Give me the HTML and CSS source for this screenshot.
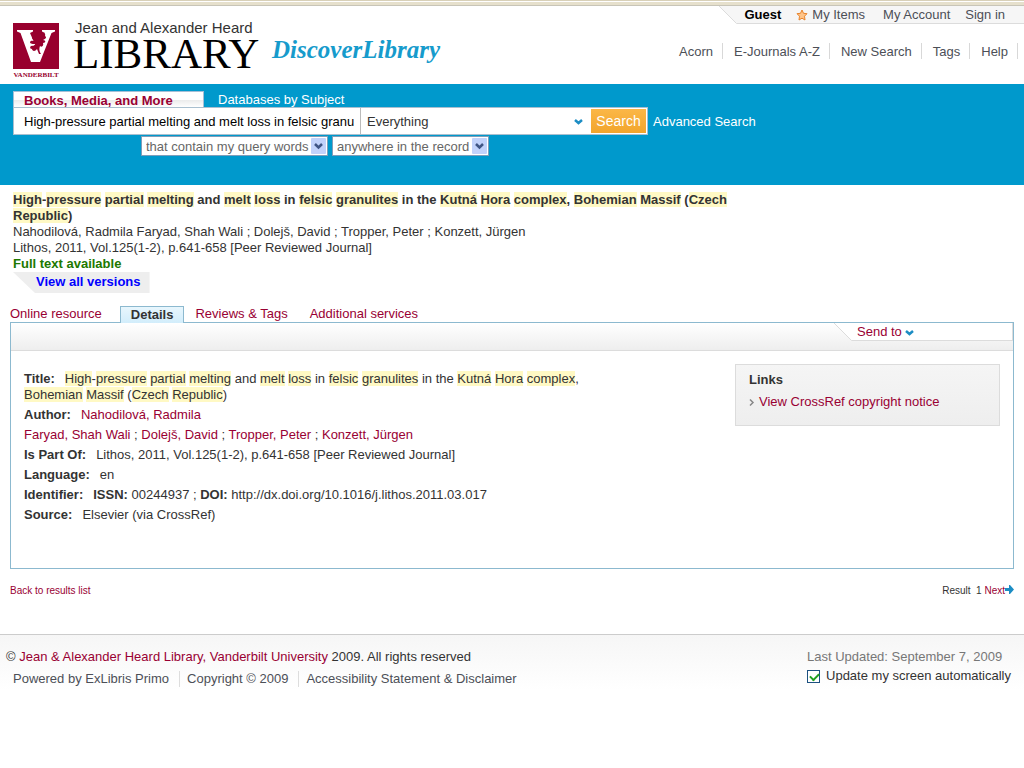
FILE: index.html
```html
<!DOCTYPE html>
<html lang="en">
<head>
<meta charset="utf-8">
<title>DiscoverLibrary</title>
<link rel="stylesheet" href="styles.css">
</head>
<body>
<div class="top-strip"></div>
<header class="header">
  <a class="brand" href="#">
    <span class="crest">
      <svg width="46" height="46" viewBox="0 0 46 46" aria-hidden="true">
        <rect width="46" height="46" fill="#98002e"/>
        <path d="M4 7H20V8.500L17 10L24 26L32 10L29 8.500V7H42V8.500L38.500 10L27 39H18L7.500 10L4 8.500Z" fill="#fff"/>
        <path d="M26 8C29 7 30 9 28 12C31 9 33 11 32 13C34 14 33 16 30 17C33 17 33 20 30 20C31 22 29 25 27 23C26 26 26 28 28 31L26 31L24 26C22 29 19 28 19 26C16 26 17 22 20 23L23 21C20 21 17 21 17 19C18 17 20 18 22 18C19 16 18 14 20 13C22 12 23 14 24 14C23 12 24 9 26 8Z" fill="#98002e"/>
      </svg>
      <span class="crest-name">VANDERBILT</span>
    </span>
    <span class="brand-text">
      <span class="brand-small">Jean and Alexander Heard</span>
      <span class="brand-large">LIBRARY</span>
    </span>
    <span class="product">DiscoverLibrary</span>
  </a>
  <div class="header-nav">
    <div class="account">
      <svg class="slant" width="18" height="18" viewBox="0 0 18 18" aria-hidden="true"><path d="M0 0H18V17.500Z" fill="#f6f6f6"/><path d="M0 0L17.500 17.500H18" stroke="#dcdcdc" fill="none"/></svg>
      <nav class="account-links">
        <strong class="guest">Guest</strong>
        <a class="items" href="#"><svg width="12" height="12" viewBox="0 0 12 12" aria-hidden="true"><path d="M6 1L7.500 4.300L11 4.700L8.500 7.200L9 11L6 9.200L3 11L3.500 7.200L1 4.700L4.500 4.300Z" fill="#ffc58a" stroke="#e8842c"/></svg>My Items</a>
        <a href="#">My Account</a>
        <a href="#">Sign in</a>
      </nav>
    </div>
    <nav class="main-links">
      <a href="#">Acorn</a><a href="#">E-Journals A-Z</a><a href="#">New Search</a><a href="#">Tags</a><a href="#">Help</a>
    </nav>
  </div>
</header>

<form class="search">
  <nav class="search-tabs">
    <a class="search-tab active" href="#">Books, Media, and More</a>
    <a class="search-tab" href="#">Databases by Subject</a>
  </nav>
  <div class="search-row">
    <div class="search-box">
      <input class="query" type="text" aria-label="Search terms" value="High-pressure partial melting and melt loss in felsic granulites">
      <span class="scope">
        <select aria-label="Search scope"><option>Everything</option></select>
        <svg class="scope-arrow" width="9" height="6" viewBox="0 0 9 6" aria-hidden="true"><path d="M1 1L4.500 4L8 1" stroke="#1c8dc4" stroke-width="2.500" fill="none"/></svg>
      </span>
      <button class="go" type="button">Search</button>
    </div>
    <a class="advanced" href="#">Advanced Search</a>
  </div>
  <div class="filters">
    <span class="filter filter-match">
      <select aria-label="Match type"><option>that contain my query words</option></select>
      <svg class="filter-arrow" width="15" height="16" viewBox="0 0 15 16" aria-hidden="true"><rect width="15" height="16" rx="1" fill="#c1d2fb"/><path d="M4 6L7.500 9.500L11 6" stroke="#3f5585" stroke-width="2.500" fill="none"/></svg>
    </span>
    <span class="filter filter-field">
      <select aria-label="Search field"><option>anywhere in the record</option></select>
      <svg class="filter-arrow" width="15" height="16" viewBox="0 0 15 16" aria-hidden="true"><rect width="15" height="16" rx="1" fill="#c1d2fb"/><path d="M4 6L7.500 9.500L11 6" stroke="#3f5585" stroke-width="2.500" fill="none"/></svg>
    </span>
  </div>
</form>

<main class="main">
  <section class="record">
    <h1 class="record-title"><mark>High</mark>-<mark>pressure</mark> <mark>partial</mark> <mark>melting</mark> and <mark>melt</mark> <mark>loss</mark> in <mark>felsic</mark> <mark>granulites</mark> in the <mark>Kutná</mark> <mark>Hora</mark> <mark>complex</mark>, <mark>Bohemian</mark> <mark>Massif</mark> (<mark>Czech</mark> <mark>Republic</mark>)</h1>
    <p>Nahodilová, Radmila Faryad, Shah Wali ; Dolejš, David ; Tropper, Peter ; Konzett, Jürgen</p>
    <p>Lithos, 2011, Vol.125(1-2), p.641-658 [Peer Reviewed Journal]</p>
    <p class="available">Full text available</p>
    <a class="versions" href="#">View all versions</a>
  </section>

  <nav class="tabs">
    <a class="tab tab-online" href="#">Online resource</a>
    <a class="tab active" href="#">Details</a>
    <a class="tab tab-reviews" href="#">Reviews &amp; Tags</a>
    <a class="tab" href="#">Additional services</a>
  </nav>
  <section class="panel">
    <div class="toolbar">
      <svg class="slant" width="18" height="18" viewBox="0 0 18 18" aria-hidden="true"><path d="M0 0H18V17.500Z" fill="#fff"/><path d="M0 0L17.500 17.500H18" stroke="#dcdcdc" fill="none"/></svg>
      <button class="send" type="button">Send to <svg width="9" height="6" viewBox="0 0 9 6" aria-hidden="true"><path d="M1 1L4.500 4L8 1" stroke="#1c8dc4" stroke-width="2.500" fill="none"/></svg></button>
    </div>
    <div class="panel-body">
      <div class="fields">
        <p><b>Title:</b><mark>High</mark>-<mark>pressure</mark> <mark>partial</mark> <mark>melting</mark> and <mark>melt</mark> <mark>loss</mark> in <mark>felsic</mark> <mark>granulites</mark> in the <mark>Kutná</mark> <mark>Hora</mark> <mark>complex</mark>, <mark>Bohemian</mark> <mark>Massif</mark> (<mark>Czech</mark> <mark>Republic</mark>)</p>
        <p><b>Author:</b><a href="#">Nahodilová, Radmila</a></p>
        <p><a href="#">Faryad, Shah Wali</a> ; <a href="#">Dolejš, David</a> ; <a href="#">Tropper, Peter</a> ; <a href="#">Konzett, Jürgen</a></p>
        <p><b>Is Part Of:</b>Lithos, 2011, Vol.125(1-2), p.641-658 [Peer Reviewed Journal]</p>
        <p><b>Language:</b>en</p>
        <p><b>Identifier:</b><strong>ISSN:</strong> 00244937 ; <strong>DOI:</strong> http://dx.doi.org/10.1016/j.lithos.2011.03.017</p>
        <p><b>Source:</b>Elsevier (via CrossRef)</p>
      </div>
      <aside class="links">
        <h2>Links</h2>
        <a href="#"><svg width="6" height="7" viewBox="0 0 6 7" aria-hidden="true"><path d="M1 .5L4 3.500L1 6.500" stroke="#888" stroke-width="1.500" fill="none"/></svg>View CrossRef copyright notice</a>
      </aside>
    </div>
  </section>
  <nav class="pager">
    <a href="#">Back to results list</a>
    <span class="pager-next">Result&nbsp; 1 <a href="#">Next<svg width="9" height="9" viewBox="0 0 9 9" aria-hidden="true"><path d="M0 3H4V0H5L9 4.500L5 9H4V6H0Z" fill="#1c8dc4"/></svg></a></span>
  </nav>
</main>

<footer class="footer">
  <div>
    <p class="rights">© <a href="#">Jean &amp; Alexander Heard Library, Vanderbilt University</a> 2009. All rights reserved</p>
    <p class="legal"><a href="#">Powered by ExLibris Primo</a><a href="#">Copyright © 2009</a><a href="#">Accessibility Statement &amp; Disclaimer</a></p>
  </div>
  <div class="status">
    <p class="updated">Last Updated: September 7, 2009</p>
    <label class="auto"><input type="checkbox" checked>Update my screen automatically</label>
  </div>
</footer>
</body>
</html>
```
FILE: styles.css
```css
* { box-sizing: border-box; }
body { margin: 0; background: #fff; color: #333; font: 13px/16px "Liberation Sans", Arial, sans-serif; }
p, h1, h2 { margin: 0; font-size: inherit; }
a { color: #903; text-decoration: none; }
button, input, select { font: inherit; margin: 0; }
svg { flex: none; }
mark { background: #fff9c4; color: inherit; }

.top-strip { height: 6px; border-top: 1px solid #d8d0b8; border-bottom: 1px solid #c8c5b8; background: linear-gradient(#fff 1px, #e6e0cc 1px); }
.header { display: flex; justify-content: space-between; height: 78px; padding-left: 13px; }
.brand { display: flex; color: #000; }
.crest { display: flex; flex-direction: column; align-items: center; width: 46px; padding-top: 17px; }
.crest-name { padding-top: 1px; color: #98002e; font: bold 7px/10px "Liberation Serif", serif; }
.brand-text { display: flex; flex-direction: column; width: 198px; padding: 14px 0 0 14px; }
.brand-small { padding-left: 2px; color: #333; font-size: 15px; line-height: 16px; white-space: nowrap; }
.brand-large { font: 43px/36px "Liberation Serif", serif; }
.product { padding: 28px 0 0 15px; color: #169bcc; font: italic bold 25px/32px "Liberation Serif", serif; }

.header-nav { display: flex; flex-direction: column; align-items: flex-end; }
.header-nav a { color: #4c4f57; }
.account { display: flex; }
.account-links { display: flex; gap: 15px; height: 18px; padding: 0 19px 0 7px; background: #f6f6f6; border-bottom: 1px solid #dcdcdc; line-height: 18px; }
.guest { color: #000; }
.items { display: flex; align-items: center; gap: 4px; padding-right: 3px; }
.main-links { display: flex; padding-top: 19px; margin-right: 6px; }
.main-links a { padding: 1px 9px 0 11px; border-right: 1px solid #d8d8d8; line-height: 15px; }

.search { min-height: 101px; padding: 7px 13px 0; background: #09c; }
.search-tabs { display: flex; }
.search-tab { height: 16px; padding: 1px 14px 0; color: #fff; }
.search-tab.active { width: 191px; padding: 1px 0 0 10px; border: solid #a5bfd6; border-width: 1px 1px 0; background: linear-gradient(#fff 50%, #eaeaea 51%, #fff); color: #903; font-weight: bold; }
.search-row { display: flex; align-items: center; gap: 5px; }
.search-box { display: flex; width: 635px; height: 28px; border: 1px solid #a9bfcf; background: #fff; }
.query { width: 347px; padding: 2px 6px 0 10px; border: 0; border-right: 1px solid #bbb; background: #fff; color: #000; outline: 0; }
.scope { position: relative; flex: 1; display: flex; }
.scope select { flex: 1; padding: 1px 6px 0; border: 0; background: #fff; color: #333; appearance: none; }
.scope-arrow { position: absolute; right: 7px; top: 11px; }
.go { width: 55px; margin: 1px; padding: 0; border: 0; background: linear-gradient(#fbb747, #f2a52c); color: #fff; font-size: 14px; }
.advanced { padding-top: 2px; color: #fff; }
.filters { display: flex; gap: 4px; padding: 1px 0 0 128px; }
.filter { position: relative; display: flex; height: 20px; }
.filter select { width: 100%; padding: 1px 4px 0; border: 1px solid #7f9db9; background: #fff; color: #666; appearance: none; }
.filter-match { width: 187px; }
.filter-field { width: 157px; }
.filter-arrow { position: absolute; right: 2px; top: 2px; }

.main { padding: 7px 10px 0; }
.record { max-width: 750px; padding: 0 3px; }
.available { color: #207800; font-weight: bold; }
.versions { display: inline-block; padding: 2px 9px 3px 23px; background: #eee; color: #00f; font-weight: bold; clip-path: polygon(0 0, 100% 0, 100% 100%, 22px 100%); }

.tabs { display: flex; height: 16px; margin-top: 13px; line-height: 16px; }
.tab { padding-right: 22px; }
.tab-online { padding-right: 18px; }
.tab-reviews { padding-left: 11px; }
.tab.active { margin-bottom: -1px; padding: 0 10px; border: 1px solid #8cb9cf; border-bottom: 0; background: linear-gradient(#e8f6fd, #d2edfb); color: #333; font-weight: bold; }
.panel { min-height: 247px; border: 1px solid #8cb9cf; }
.toolbar { display: flex; justify-content: flex-end; height: 28px; background: linear-gradient(#fff, #eee); border-bottom: 1px solid #dcdcdc; }
.send { width: 161px; height: 18px; padding: 0 5px; border: solid #dcdcdc; border-width: 0 1px 1px 0; background: #fff; color: #903; text-align: left; line-height: 17px; }
.panel-body { display: flex; justify-content: space-between; align-items: flex-start; padding: 13px; }
.fields { width: 600px; padding-top: 7px; }
.fields p { margin-bottom: 4px; }
.fields b { margin-right: 10px; }
.links { width: 265px; height: 62px; padding: 7px 13px; border: 1px solid #dcdcdc; background: linear-gradient(#f5f5f5, #eee); }
.links h2 { margin-bottom: 6px; }
.links a { display: flex; align-items: center; gap: 4px; }
.pager { display: flex; justify-content: space-between; padding: 14px 0 36px; font-size: 10px; line-height: 15px; }

.footer { display: flex; justify-content: space-between; align-items: flex-start; padding: 14px 13px 20px 6px; border-top: 1px solid #ccc; background: linear-gradient(#f6f6f6, #fff 55px); }
.legal { display: flex; margin-top: 6px; }
.legal a { padding: 0 10px 0 7px; border-right: 1px solid #ddd; color: #4c4f57; }
.legal a:last-child { border: 0; }
.updated { color: #777; }
.auto { display: flex; align-items: center; gap: 6px; margin-top: 3px; }
.auto input { appearance: none; width: 13px; height: 13px; border: 1px solid #1c5180; background: #fff; }
.auto input:checked::after { content: ""; display: block; width: 7px; height: 4px; margin: 2px; border: solid #21a121; border-width: 0 0 2px 2px; transform: rotate(-45deg); }
```
